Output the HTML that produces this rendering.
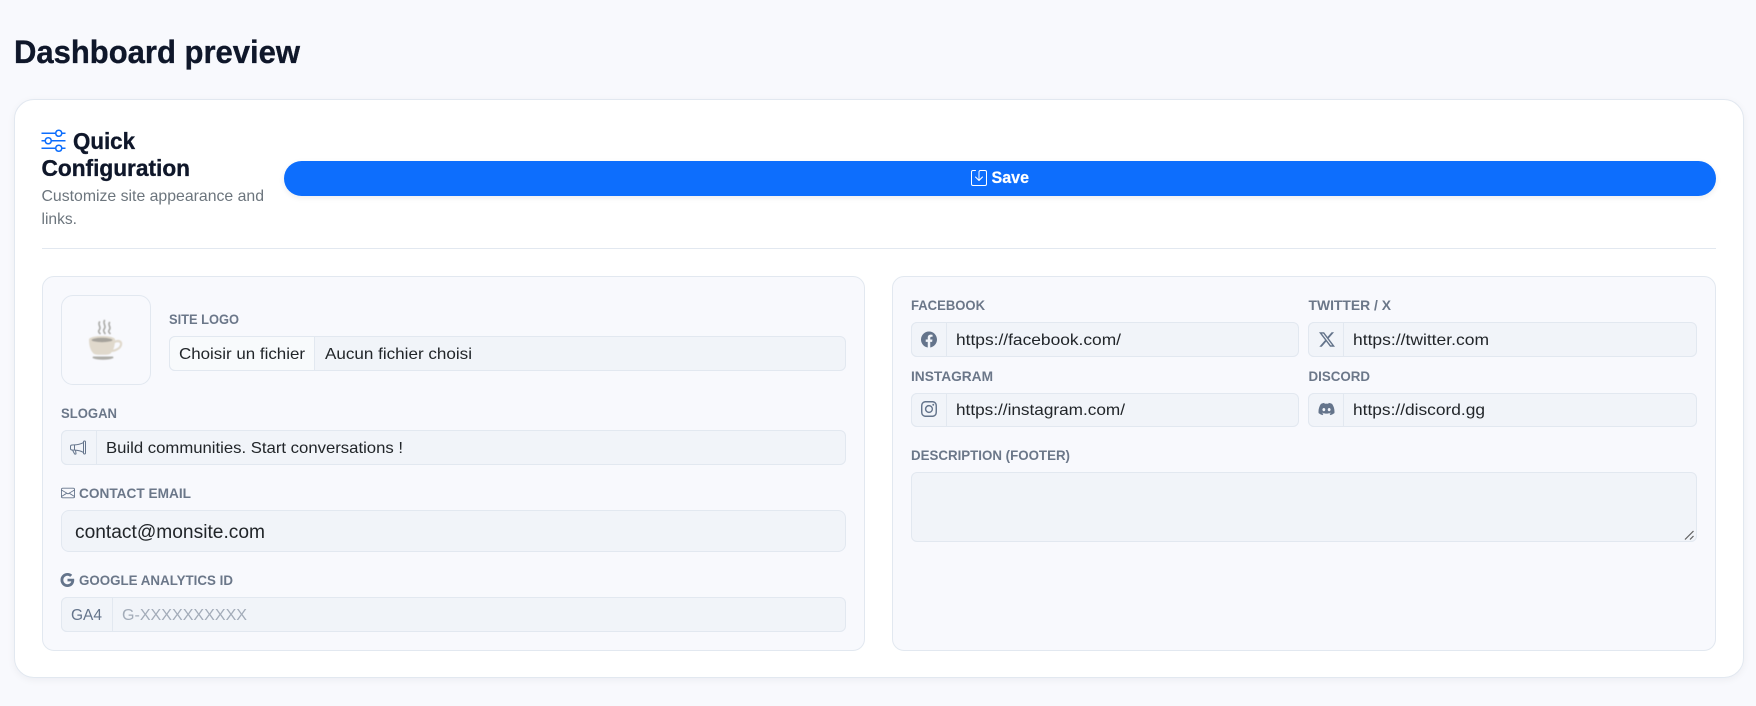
<!DOCTYPE html>
<html lang="en">
<head>
<meta charset="utf-8">
<title>Dashboard preview</title>
<style>
html,body{margin:0;padding:0;width:1756px;height:706px;overflow:hidden;background:#f8f9fd;}
.b{position:absolute;box-sizing:border-box;}
.card{left:14px;top:99px;width:1730px;height:579px;background:#fff;border:1px solid #e2e8f0;border-radius:20px;box-shadow:0 2px 8px rgba(15,23,42,.05);}
.panel{background:#f8f9fd;border:1px solid #e2e8f0;border-radius:12px;}
.inp{background:#f1f4f9;border:1px solid #e2e8f0;border-radius:6px;}
.add{background:#f1f4f9;border:1px solid #e2e8f0;border-radius:6px 0 0 6px;}
svg.o{position:absolute;left:0;top:0;}
text{font-family:"Liberation Sans",Arial,sans-serif;}
.t{font-weight:700;fill:#0f172a;stroke:#0f172a;stroke-width:.35px;}
.l{font-weight:700;font-size:14px;fill:#6b7789;}
.v{font-size:16px;fill:#212529;}
.s{font-size:16px;fill:#6c757d;}
</style>
</head>
<body>
<div class="b card"></div>
<div class="b" style="left:42px;top:248px;width:1674px;height:1px;background:#e2e8f0"></div>
<div class="b" style="left:284px;top:161px;width:1432px;height:35px;border-radius:18px;background:#0d6efd;box-shadow:0 2px 6px rgba(15,23,42,.08)"></div>

<div class="b panel" style="left:42px;top:276px;width:823px;height:375px"></div>
<div class="b panel" style="left:892px;top:276px;width:824px;height:375px"></div>

<div class="b" style="left:61px;top:295px;width:90px;height:90px;background:#f8f9fd;border:1px solid #e2e8f0;border-radius:12px"></div>

<div class="b inp" style="left:169px;top:336px;width:677px;height:35px"></div>
<div class="b add" style="left:169px;top:336px;width:146px;height:35px;background:#f8fafc"></div>

<div class="b inp" style="left:61px;top:430px;width:785px;height:35px"></div>
<div class="b add" style="left:61px;top:430px;width:36px;height:35px"></div>

<div class="b inp" style="left:61px;top:510px;width:785px;height:42px;border-radius:8px"></div>

<div class="b inp" style="left:61px;top:597px;width:785px;height:35px"></div>
<div class="b add" style="left:61px;top:597px;width:52px;height:35px"></div>

<div class="b inp" style="left:911px;top:322px;width:388px;height:35px"></div>
<div class="b add" style="left:911px;top:322px;width:36px;height:35px"></div>
<div class="b inp" style="left:1308px;top:322px;width:389px;height:35px"></div>
<div class="b add" style="left:1308px;top:322px;width:36px;height:35px"></div>
<div class="b inp" style="left:911px;top:393px;width:388px;height:34px"></div>
<div class="b add" style="left:911px;top:393px;width:36px;height:34px"></div>
<div class="b inp" style="left:1308px;top:393px;width:389px;height:34px"></div>
<div class="b add" style="left:1308px;top:393px;width:36px;height:34px"></div>
<div class="b inp" style="left:911px;top:472px;width:786px;height:70px"></div>

<svg class="o" width="1756" height="706" viewBox="0 0 1756 706" xmlns="http://www.w3.org/2000/svg">
  <defs><filter id="soft" x="-10%" y="-10%" width="120%" height="120%"><feGaussianBlur stdDeviation="0.45"/></filter></defs>

  <text x="14" y="63" class="t" font-size="32" textLength="286" lengthAdjust="spacingAndGlyphs">Dashboard preview</text>

  <svg x="41.500" y="128" width="24" height="24" viewBox="0 0 16 16" fill="#0d6efd"><path fill-rule="evenodd" d="M11.500 2a1.500 1.500 0 1 0 0 3 1.500 1.500 0 0 0 0-3M9.050 3a2.500 2.500 0 0 1 4.900 0H16v1h-2.050a2.500 2.500 0 0 1-4.900 0H0V3zM4.500 7a1.500 1.500 0 1 0 0 3 1.500 1.500 0 0 0 0-3M2.050 8a2.500 2.500 0 0 1 4.900 0H16v1H6.950a2.500 2.500 0 0 1-4.900 0H0V8zm9.450 4a1.500 1.500 0 1 0 0 3 1.500 1.500 0 0 0 0-3m-2.450 1a2.500 2.500 0 0 1 4.900 0H16v1h-2.050a2.500 2.500 0 0 1-4.900 0H0v-1z"/></svg>
  <text x="73" y="149" class="t" font-size="23" textLength="62" lengthAdjust="spacingAndGlyphs">Quick</text>
  <text x="41.500" y="176" class="t" font-size="23" textLength="148.500" lengthAdjust="spacingAndGlyphs">Configuration</text>
  <text x="41.500" y="201" class="s" textLength="222.500" lengthAdjust="spacingAndGlyphs">Customize site appearance and</text>
  <text x="41.500" y="224" class="s" textLength="35.500" lengthAdjust="spacingAndGlyphs">links.</text>

  <svg x="971" y="170" width="16" height="16" viewBox="0 0 16 16" fill="#fff"><path d="M2 1a1 1 0 0 0-1 1v12a1 1 0 0 0 1 1h12a1 1 0 0 0 1-1V2a1 1 0 0 0-1-1H9.500a1 1 0 0 0-1 1v7.293l2.646-2.647a.5.5 0 0 1 .708.708l-3.500 3.500a.5.5 0 0 1-.708 0l-3.500-3.500a.5.5 0 1 1 .708-.708L7.500 9.293V2a2 2 0 0 1 2-2H14a2 2 0 0 1 2 2v12a2 2 0 0 1-2 2H2a2 2 0 0 1-2-2V2a2 2 0 0 1 2-2h2.500a.5.5 0 0 1 0 1z"/></svg>
  <text x="991.500" y="183" font-size="17" font-weight="700" fill="#fff" stroke="#fff" stroke-width=".2" textLength="37.500" lengthAdjust="spacingAndGlyphs">Save</text>

  <!-- coffee cup -->
  <g filter="url(#soft)">
    <g fill="none" stroke="#a9a9a6" stroke-width="1.600" stroke-linecap="round">
      <path d="M99.500 322c-2 3 2 5 0 7.500s0 3.500.5 4"/>
      <path d="M104.500 320.500c-2 3 2 5.500 0 8s0 4 .5 5"/>
      <path d="M109.500 322.500c-2 3 2 4.500 0 7s0 3 .5 4"/>
    </g>
    <path d="M93 356.500h20l.5 1.500c-3 1.300-6.500 1.700-10.500 1.700s-7.500-.4-10.500-1.700z" fill="#afaea9"/>
    <path d="M112 342.500c2-2.300 6-3.400 8.500-2 2.300 1.300 2.200 4.800.3 7.200-1.900 2.400-6 4.300-9.800 4.300l.8-2.400c3 0 6-1.500 7.400-3.400 1.100-1.500 1.100-3 .1-3.600-1.400-.8-4.100-.1-6.800 1.700z" fill="#e0d9cc"/>
    <path d="M89 339.500c0-2 6-3.500 13-3.500s13 1.500 13 3.500c0 6-1.300 10.500-4 13.500-1.200 1.300-2.500 1.800-9 1.800s-7.800-.5-9-1.800c-2.700-3-4-7.500-4-13.500z" fill="#e0d9cc"/>
    <ellipse cx="102" cy="340" rx="10.500" ry="2.200" fill="#a5a29b"/>
  </g>

  <text x="169" y="324" class="l" textLength="70" lengthAdjust="spacingAndGlyphs">SITE LOGO</text>
  <text x="179" y="359" class="v" textLength="126" lengthAdjust="spacingAndGlyphs">Choisir un fichier</text>
  <text x="325" y="359" class="v" textLength="147" lengthAdjust="spacingAndGlyphs">Aucun fichier choisi</text>

  <text x="61" y="418" class="l" textLength="56" lengthAdjust="spacingAndGlyphs">SLOGAN</text>
  <svg x="70" y="439.500" width="16" height="16" viewBox="0 0 16 16" fill="#64748b"><path d="M13 2.500a1.500 1.500 0 0 1 3 0v11a1.500 1.500 0 0 1-3 0v-.214c-2.162-1.241-4.490-1.843-6.912-2.083l.405 2.712A1 1 0 0 1 5.510 15.100h-.548a1 1 0 0 1-.916-.599l-1.850-3.490-.202-.003A2.014 2.014 0 0 1 0 9V7a2.020 2.020 0 0 1 1.992-2.013 75 75 0 0 0 2.483-.075c3.043-.154 6.148-.849 8.525-2.199zm1 0v11a.5.5 0 0 0 1 0v-11a.5.5 0 0 0-1 0m-1 1.350c-2.344 1.205-5.209 1.842-8 2.033v4.233q.27.015.537.036c2.568.189 5.093.744 7.463 1.993zm-9 6.215v-4.130a95 95 0 0 1-1.992.052A1.020 1.020 0 0 0 1 7v2c0 .55.448 1.002 1.006 1.009A61 61 0 0 1 4 10.065m-.657.975 1.609 3.037.01.024h.548l-.002-.014-.443-2.966a68 68 0 0 0-1.722-.082z"/></svg>
  <text x="106" y="453" class="v" textLength="297" lengthAdjust="spacingAndGlyphs">Build communities. Start conversations !</text>

  <svg x="61" y="486" width="14" height="14" viewBox="0 0 16 16" fill="#64748b"><path d="M0 4a2 2 0 0 1 2-2h12a2 2 0 0 1 2 2v8a2 2 0 0 1-2 2H2a2 2 0 0 1-2-2zm2-1a1 1 0 0 0-1 1v.217l7 4.200 7-4.200V4a1 1 0 0 0-1-1zm13 2.383-4.708 2.825L15 11.105zm-.034 6.876-5.640-3.471L8 9.583l-1.326-.795-5.640 3.470A1 1 0 0 0 2 13h12a1 1 0 0 0 .966-.741M1 11.105l4.708-2.897L1 5.383z"/></svg>
  <text x="79" y="498" class="l" textLength="112" lengthAdjust="spacingAndGlyphs">CONTACT EMAIL</text>
  <text x="75" y="538" font-size="19" fill="#212529" textLength="190" lengthAdjust="spacingAndGlyphs">contact@monsite.com</text>

  <svg x="60.500" y="573" width="14" height="14" viewBox="0 0 16 16" fill="#64748b"><path d="M15.545 6.558a9.400 9.400 0 0 1 .139 1.626c0 2.434-.87 4.492-2.384 5.885h.002C11.978 15.292 10.158 16 8 16A8 8 0 1 1 8 0a7.700 7.700 0 0 1 5.352 2.082l-2.284 2.284A4.350 4.350 0 0 0 8 3.166c-2.087 0-3.860 1.408-4.492 3.304a4.800 4.800 0 0 0 0 3.063h.003c.635 1.893 2.405 3.301 4.492 3.301 1.078 0 2.004-.276 2.722-.764h-.003a3.700 3.700 0 0 0 1.599-2.431H8v-3.080z"/></svg>
  <text x="79" y="585" class="l" textLength="154" lengthAdjust="spacingAndGlyphs">GOOGLE ANALYTICS ID</text>
  <text x="71" y="620" font-size="16" fill="#64748b" textLength="31" lengthAdjust="spacingAndGlyphs">GA4</text>
  <text x="122" y="620" font-size="16" fill="#a3acb9" textLength="125" lengthAdjust="spacingAndGlyphs">G-XXXXXXXXXX</text>

  <text x="911" y="310" class="l" textLength="74" lengthAdjust="spacingAndGlyphs">FACEBOOK</text>
  <svg x="921" y="331.500" width="16" height="16" viewBox="0 0 16 16" fill="#64748b"><path d="M16 8.049c0-4.446-3.582-8.050-8-8.050C3.580 0-.002 3.603-.002 8.050c0 4.017 2.926 7.347 6.750 7.951v-5.625h-2.030V8.050H6.750V6.275c0-2.017 1.195-3.131 3.022-3.131.876 0 1.791.157 1.791.157v1.980h-1.009c-.993 0-1.303.621-1.303 1.258v1.510h2.218l-.354 2.326H9.250V16c3.824-.604 6.750-3.934 6.750-7.951"/></svg>
  <text x="956" y="345" class="v" textLength="165" lengthAdjust="spacingAndGlyphs">https://facebook.com/</text>

  <text x="1308.500" y="310" class="l" textLength="82.500" lengthAdjust="spacingAndGlyphs">TWITTER / X</text>
  <svg x="1319" y="331.500" width="16" height="16" viewBox="0 0 16 16" fill="#64748b"><path d="M12.600.75h2.454l-5.360 6.142L16 15.250h-4.937l-3.867-5.070-4.425 5.070H.316l5.733-6.570L0 .75h5.063l3.495 4.633L12.601.75Zm-.86 13.028h1.360L4.323 2.145H2.865z"/></svg>
  <text x="1353" y="345" class="v" textLength="136" lengthAdjust="spacingAndGlyphs">https://twitter.com</text>

  <text x="911" y="381" class="l" textLength="82" lengthAdjust="spacingAndGlyphs">INSTAGRAM</text>
  <svg x="921" y="401" width="16" height="16" viewBox="0 0 16 16" fill="#64748b"><path d="M8 0C5.829 0 5.556.01 4.703.048 3.850.088 3.269.222 2.760.42a3.900 3.900 0 0 0-1.417.923A3.900 3.900 0 0 0 .42 2.760C.222 3.268.087 3.850.048 4.700.01 5.555 0 5.827 0 8.001c0 2.172.01 2.444.048 3.297.04.852.174 1.433.372 1.942.205.526.478.972.923 1.417.444.445.89.719 1.416.923.51.198 1.090.333 1.942.372C5.555 15.990 5.827 16 8 16s2.444-.01 3.298-.048c.851-.04 1.434-.174 1.943-.372a3.900 3.900 0 0 0 1.416-.923c.445-.445.718-.891.923-1.417.197-.509.332-1.090.372-1.942C15.990 10.445 16 10.173 16 8s-.01-2.445-.048-3.299c-.04-.851-.175-1.433-.372-1.941a3.900 3.900 0 0 0-.923-1.417A3.900 3.900 0 0 0 13.240.42c-.51-.198-1.092-.333-1.943-.372C10.443.01 10.172 0 7.998 0zm-.717 1.442h.718c2.136 0 2.389.007 3.232.046.78.035 1.204.166 1.486.275.373.145.64.319.92.599s.453.546.598.92c.11.281.24.705.275 1.485.039.843.047 1.096.047 3.231s-.008 2.389-.047 3.232c-.035.78-.166 1.203-.275 1.485a2.500 2.500 0 0 1-.599.919c-.28.28-.546.453-.92.598-.28.11-.704.24-1.485.276-.843.038-1.096.047-3.232.047s-2.390-.009-3.233-.047c-.78-.036-1.203-.166-1.485-.276a2.500 2.500 0 0 1-.92-.598 2.500 2.500 0 0 1-.6-.92c-.109-.281-.24-.705-.275-1.485-.038-.843-.046-1.096-.046-3.233s.008-2.388.046-3.231c.036-.78.166-1.204.276-1.486.145-.373.319-.64.599-.92s.546-.453.92-.598c.282-.11.705-.24 1.485-.276.738-.034 1.024-.044 2.515-.045zm4.988 1.328a.96.96 0 1 0 0 1.920.96.96 0 0 0 0-1.920m-4.270 1.122a4.109 4.109 0 1 0 0 8.217 4.109 4.109 0 0 0 0-8.217m0 1.441a2.667 2.667 0 1 1 0 5.334 2.667 2.667 0 0 1 0-5.334"/></svg>
  <text x="956" y="415" class="v" textLength="169" lengthAdjust="spacingAndGlyphs">https://instagram.com/</text>

  <text x="1308.500" y="381" class="l" textLength="61.500" lengthAdjust="spacingAndGlyphs">DISCORD</text>
  <svg x="1318.500" y="401" width="16" height="16" viewBox="0 0 16 16" fill="#64748b"><path d="M13.545 2.907a13.200 13.200 0 0 0-3.257-1.011.05.05 0 0 0-.052.025c-.141.25-.297.577-.406.833a12.200 12.200 0 0 0-3.658 0 8 8 0 0 0-.412-.833.05.05 0 0 0-.052-.025c-1.125.194-2.220.534-3.257 1.011a.04.04 0 0 0-.021.018C.356 6.024-.213 9.047.066 12.032q.003.022.021.037a13.300 13.300 0 0 0 3.996 2.020.05.05 0 0 0 .056-.019q.463-.63.818-1.329a.05.05 0 0 0-.01-.059l-.018-.011a9 9 0 0 1-1.248-.595.05.05 0 0 1-.02-.066l.015-.019q.127-.095.248-.195a.05.05 0 0 1 .051-.007c2.619 1.196 5.454 1.196 8.041 0a.05.05 0 0 1 .053.007q.121.1.248.195a.05.05 0 0 1-.004.085 8 8 0 0 1-1.249.594.05.05 0 0 0-.03.03.05.05 0 0 0 .003.041c.24.465.515.909.817 1.329a.05.05 0 0 0 .056.019 13.200 13.200 0 0 0 4.001-2.020.05.05 0 0 0 .021-.037c.334-3.451-.559-6.449-2.366-9.106a.03.03 0 0 0-.02-.019m-8.198 7.307c-.789 0-1.438-.724-1.438-1.612s.637-1.613 1.438-1.613c.807 0 1.450.73 1.438 1.613 0 .888-.637 1.612-1.438 1.612m5.316 0c-.788 0-1.438-.724-1.438-1.612s.637-1.613 1.438-1.613c.807 0 1.451.73 1.438 1.613 0 .888-.631 1.612-1.438 1.612"/></svg>
  <text x="1353" y="415" class="v" textLength="132" lengthAdjust="spacingAndGlyphs">https://discord.gg</text>

  <text x="911" y="460" class="l" textLength="159" lengthAdjust="spacingAndGlyphs">DESCRIPTION (FOOTER)</text>

  <!-- textarea resizer -->
  <g stroke="#5f5f5f" stroke-width="1.200" fill="none">
    <path d="M1685 539.500l8.500-8.500"/>
    <path d="M1690 539.500l3.500-3.500"/>
  </g>
</svg>
</body>
</html>
